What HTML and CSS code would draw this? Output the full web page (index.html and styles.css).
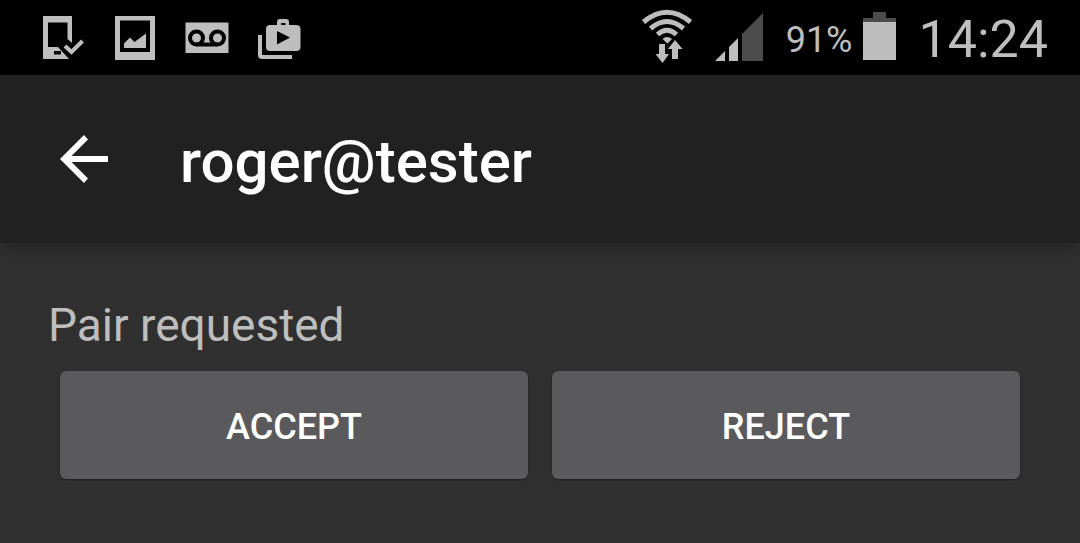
FILE: index.html
```html
<!DOCTYPE html>
<html lang="en">
<head>
    <meta charset="UTF-8">
    <meta name="viewport" content="width=device-width, initial-scale=1.0">
    <title>roger@tester</title>
    <link rel="stylesheet" href="styles.css">
</head>
<body>
    <div class="status-bar">
        <div class="notifications">
            <svg class="icon" viewBox="40 0 48 76" aria-hidden="true">
                <path fill-rule="evenodd" d="M43 16H72V43L67.500 39V22.500H48V47H58L69 59H43Z M54 51V54.500H61V51Z"/>
                <path class="line" d="M65 46L71.500 52L82.500 41"/>
            </svg>
            <svg class="icon" viewBox="112 0 48 76" aria-hidden="true">
                <path fill-rule="evenodd" d="M115 16H155V60H115Z M120 20.500V52H150V20.500Z"/>
                <path d="M124 48V43.500L130 37.500L134.500 42L146 33.500V48Z"/>
            </svg>
            <svg class="icon" viewBox="184 0 48 76" aria-hidden="true">
                <path d="M185.500 22.500H228.500V53H185.500Z"/>
                <g class="cutout">
                    <circle cx="196.500" cy="38" r="6.500"/>
                    <circle cx="217.500" cy="38" r="6.500"/>
                    <path d="M196.500 44.500H217.500"/>
                </g>
            </svg>
            <svg class="icon" viewBox="256 0 48 76" aria-hidden="true">
                <path d="M258 35H262V55H292V59H262Q258 59 258 55Z"/>
                <path fill-rule="evenodd" d="M270 25H277V22Q277 19 280 19H286Q289 19 289 22V25H296Q300.500 25 300.500 29V47Q300.500 51 296 51H270Q266 51 266 47V29Q266 25 270 25Z M281 25H285.500V23H281Z M277 31V44.500L290 37.500Z"/>
            </svg>
        </div>
        <div class="system">
            <svg class="icon wifi" viewBox="640 0 56 76" aria-hidden="true">
                <g class="waves">
                    <path d="M643.500 22Q667 2.500 690.500 22"/>
                    <path d="M650.500 28.500Q667 14.500 683.500 28.500"/>
                    <path d="M657.500 34.500Q667 26 676.500 34.500"/>
                </g>
                <path d="M662.500 39Q667 35 672 39L667.500 43.500Z"/>
                <path d="M659 44H665V54H669L662.500 63L655.500 54H659Z"/>
                <path class="arrow-up" d="M675 40L682.500 49H678V59H672V49H668Z"/>
            </svg>
            <svg class="icon signal" viewBox="712 0 52 76" aria-hidden="true">
                <path d="M715 61L725 51V61Z M729 61V47L738 38V61Z"/>
                <path class="dim" d="M742 61V34L763 13V61Z"/>
            </svg>
            <span class="percent">91%</span>
            <svg class="icon battery" viewBox="860 0 36 76" aria-hidden="true">
                <path class="dim" d="M862 22V18H872V12H885V18H895V22Z"/>
                <path d="M862 22H895V60H862Z"/>
            </svg>
            <span class="clock">14:24</span>
        </div>
    </div>

    <header class="app-bar">
        <button type="button" class="back" aria-label="Back">
            <svg viewBox="0 0 48 48" aria-hidden="true">
                <path d="M48 21V27H11.500L28 43.500L24 48L0 24L24 0L28 4.500L11.500 21Z"/>
            </svg>
        </button>
        <h1>roger@tester</h1>
    </header>

    <main>
        <p class="message">Pair requested</p>
        <div class="actions">
            <button type="button" class="action">ACCEPT</button>
            <button type="button" class="action">REJECT</button>
        </div>
    </main>
</body>
</html>
```
FILE: styles.css
```css
* {
    box-sizing: border-box;
}

body {
    margin: 0;
    background: #303030;
    color: #bebebe;
    font-family: Roboto, "Liberation Sans", sans-serif;
}

/* Status bar */
.status-bar {
    display: flex;
    justify-content: space-between;
    height: 75px;
    padding: 0 32px 0 40px;
    background: #000;
}

.notifications, .system {
    display: flex;
}

.notifications {
    gap: 24px;
}

.icon {
    display: block;
    width: 48px;
    height: 76px;
    fill: #bebebe;
}

    .icon .line {
        fill: none;
        stroke: #bebebe;
        stroke-width: 4;
    }

    .icon .cutout {
        fill: none;
        stroke: #000;
        stroke-width: 4;
    }

    .icon .waves {
        fill: none;
        stroke: #bebebe;
        stroke-width: 5;
    }

    .icon .arrow-up {
        stroke: #000;
        stroke-width: 2;
        paint-order: stroke;
    }

    .icon .dim {
        fill: #4c4c4c;
    }

.wifi {
    width: 56px;
    margin-right: 16px;
}

.signal {
    width: 52px;
    margin-right: 22px;
}

.battery {
    width: 36px;
    margin: 0 22px 0 8px;
}

.percent {
    font-size: 36px;
    line-height: 80px;
}

.clock {
    font-size: 52px;
    line-height: 80px;
}

/* App bar */
.app-bar {
    position: relative;
    display: flex;
    align-items: center;
    gap: 72px;
    height: 168px;
    padding: 0 60px;
    background: #212121;
    box-shadow: 0 6px 14px rgba(0, 0, 0, 0.25);
}

.back {
    width: 48px;
    height: 48px;
    padding: 0;
    border: none;
    background: none;
    cursor: pointer;
}

    .back svg {
        display: block;
        fill: #fff;
    }

h1 {
    margin: 0;
    padding-top: 6px;
    color: #fff;
    font-size: 60px;
    font-weight: 500;
    line-height: 72px;
}

/* Pair request */
main {
    padding: 52px 48px 64px;
}

.message {
    margin: 0;
    font-size: 46px;
    line-height: 60px;
}

.actions {
    display: flex;
    gap: 24px;
    padding: 16px 12px 0;
}

.action {
    flex: 1;
    height: 108px;
    padding: 4px 0 0;
    border: none;
    border-radius: 6px;
    background: #5a5a5c;
    color: #fff;
    font-family: inherit;
    font-size: 36px;
    font-weight: 500;
    box-shadow: 0 1px 2px rgba(0, 0, 0, 0.4);
    cursor: pointer;
}
```
